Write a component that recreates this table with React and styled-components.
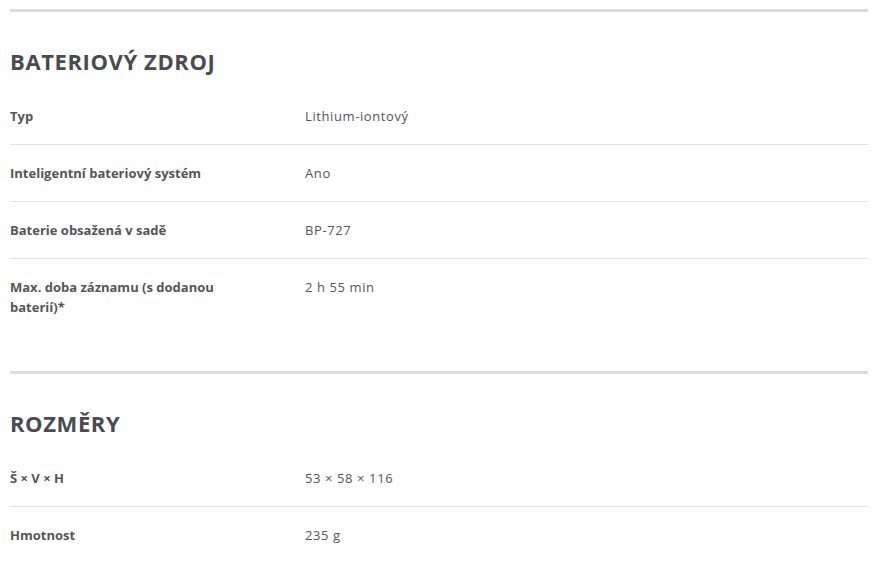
import React from "react";
import styled, { createGlobalStyle } from "styled-components";

const GlobalStyle = createGlobalStyle`
  html, body {
    margin: 0;
    padding: 0;
    background: #fff;
  }
  body {
    font-family: "Open Sans", "Liberation Sans", sans-serif;
    color: #555559;
  }
`;

const sections = [
  {
    title: "BATERIOVÝ ZDROJ",
    rows: [
      ["Typ", "Lithium-iontový"],
      ["Inteligentní bateriový systém", "Ano"],
      ["Baterie obsažená v sadě", "BP-727"],
      ["Max. doba záznamu (s dodanou baterií)*", "2 h 55 min"],
    ],
  },
  {
    title: "ROZMĚRY",
    rows: [
      ["Š × V × H", "53 × 58 × 116"],
      ["Hmotnost", "235 g"],
    ],
  },
];

function Section({ title, rows }) {
  return (
    <Wrap>
      <Title>{title}</Title>
      <Table>
        {rows.map(([label, value]) => (
          <Row key={label}>
            <Label>{label}</Label>
            <Value>{value}</Value>
          </Row>
        ))}
      </Table>
    </Wrap>
  );
}

export default function App() {
  return (
    <Page>
      <GlobalStyle />
      {sections.map((s) => (
        <Section key={s.title} title={s.title} rows={s.rows} />
      ))}
    </Page>
  );
}

//Page
const Page = styled.div`
  width: 858px;
  padding: 9px 0 0 10px;
`;

//Section
const Wrap = styled.section`
  border-top: 3px solid #dadada;
  padding-bottom: 36px;
`;

const Title = styled.h2`
  margin: 0;
  padding: 36px 0 14px;
  font-size: 22px;
  line-height: 26px;
  font-weight: 700;
  color: #4a4a50;
  letter-spacing: 0.6px;
`;

//Table
const Table = styled.div`
  display: flex;
  flex-direction: column;
`;

const Row = styled.div`
  display: grid;
  grid-template-columns: 295px 1fr;
  padding: 18px 0 18px;
  border-bottom: 1px solid #e3e3e3;
  font-size: 13px;
  line-height: 20px;
  &:last-child {
    border-bottom: none;
  }
`;

const Label = styled.div`
  font-weight: 700;
  color: #555559;
  padding-right: 60px;
`;

const Value = styled.div`
  font-weight: 400;
  color: #555559;
  letter-spacing: 0.6px;
`;
